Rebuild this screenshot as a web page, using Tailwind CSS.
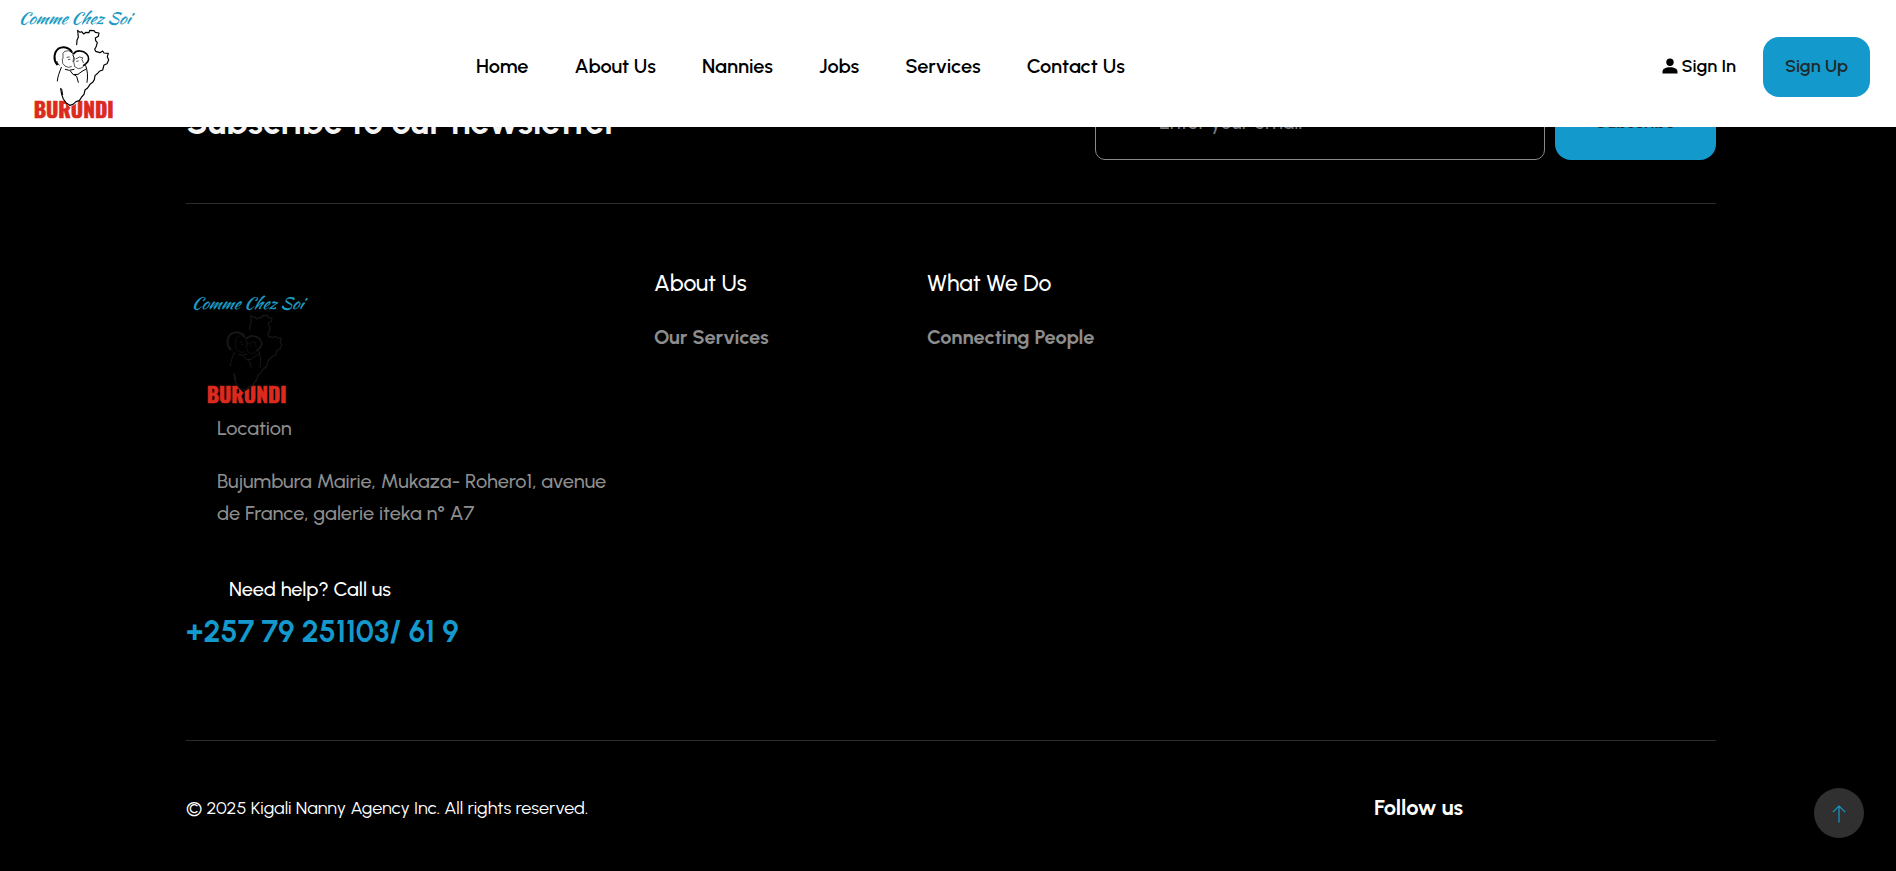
<!DOCTYPE html>
<html lang="en">
<head>
<meta charset="utf-8">
<meta name="viewport" content="width=device-width, initial-scale=1">
<title>Comme Chez Soi Burundi</title>
<script src="https://cdn.jsdelivr.net/npm/@tailwindcss/browser@4"></script>
</head>
<body class="min-h-screen bg-black font-['Urbanist','Lato',sans-serif] text-xl leading-8 font-medium text-white">

<!-- Logo artwork, shared by header and footer -->
<svg class="hidden" aria-hidden="true">
  <symbol id="logo" viewBox="39 0 411 378">
    <text x="54" y="69" font-family="'Brush Script MT','Kaushan Script','Yellowtail','Liberation Serif',serif" font-style="italic" font-weight="normal" font-size="49" fill="#1b9bc4">Comme Chez Soi</text>
    <text x="101" y="351" font-family="Impact,Oswald,'Roboto Condensed','Liberation Sans',sans-serif" font-weight="bold" font-size="63" fill="#dc2a1e" stroke="#dc2a1e" stroke-width="2">BURUNDI</text>
    <path d="M186 286L196 303L209 318L222 312L240 298L252 280Z" fill="var(--logo-bg)"/>
    <g fill="none" stroke="currentColor" stroke-linecap="round" stroke-linejoin="round">
      <path stroke-width="3.5" d="M230 131L231 118L235 109L233 88L240 94L245 92L251 99L258 94L267 95L269 88L282 89L286 94L297 96L295 106L286 111L287 119L292 125L288 138L284 145L287 151L300 155L308 150L312 156L325 157L322 167L326 177L321 188L312 192L308 207L298 211L294 216L285 224L283 236L278 244L270 250L262 262L255 267L252 280L245 288L238 299L228 302L219 310L209 313L198 305L190 294L185 280L182 263"/>
      <path stroke-width="6" d="M171 190C160 178 161 154 175 143C188 135 207 138 215 152"/>
      <path stroke-width="2" d="M174 191L172 182L165 181M172 186L178 193M189 172L189 157L194 151L205 149L217 154L221 169L219 182M214 197L205 199L195 195L188 187L187 174"/>
      <path stroke-width="5" d="M221 158C229 147 249 147 260 159C269 169 267 181 258 188L251 193"/>
      <path stroke-width="2" d="M219 164L225 174L221 181L224 197L235 203L245 201L253 192M250 185L246 176L248 170L238 168L229 173M201 169L208 168M205 176L210 175M230 181L235 180"/>
      <path stroke-width="3" d="M184 199C178 215 173 226 172 240M196 205L208 208L222 205M211 210L220 221L234 220L246 211L257 205M222 221L230 226L235 244M257 194C263 211 264 225 261 244M185 264L188 281"/>
    </g>
  </symbol>
</svg>

<header class="fixed inset-x-0 top-0 z-10 flex h-[127px] items-center bg-white pr-[26px] pl-[13px] text-black">
  <a href="#" aria-label="Comme Chez Soi Burundi" class="[--logo-bg:#fff]">
    <svg class="h-[126px] w-[137px]"><use href="#logo"/></svg>
  </a>
  <nav class="ml-[326px] flex gap-[46px] pt-[5px] font-semibold">
    <a href="#">Home</a>
    <a href="#">About Us</a>
    <a href="#">Nannies</a>
    <a href="#">Jobs</a>
    <a href="#">Services</a>
    <a href="#">Contact Us</a>
  </nav>
  <div class="ml-auto flex items-center gap-[27px] pt-[7px] text-lg font-semibold">
    <a href="#" class="flex items-center gap-1 pb-[2px]">
      <svg class="size-4" viewBox="0 0 16 16" fill="currentColor" aria-hidden="true"><circle cx="8" cy="4.2" r="3.7"/><path d="M.5 15.5v-1.7C.5 11 3.500 9.300 8 9.300s7.500 1.700 7.500 4.500v1.700z"/></svg>
      Sign In
    </a>
    <a href="#" class="flex h-[60px] w-[107px] items-center justify-center rounded-2xl bg-[#1399cc] pb-[2px] text-[#20292d]">Sign Up</a>
  </div>
</header>

<footer class="pt-[84px] pr-[180px] pl-[186px]">
  <section class="flex items-center justify-between border-b border-[#2c2c2c] pb-[43px]">
    <h2 class="text-[35px] font-bold text-[#f5f5f5]">Subscribe to our newsletter</h2>
    <form class="flex gap-[10px]">
      <input type="email" aria-label="Email" placeholder="Enter your email" class="h-[76px] w-[450px] rounded-[10px] border border-[#8a8a8a] bg-black px-[63px] text-xl text-white placeholder:text-[#7d7d7d]">
      <button type="button" class="h-[76px] w-[161px] rounded-2xl bg-[#1399cc] text-lg font-semibold text-[#20292d]">Subscribe</button>
    </form>
  </section>

  <section class="grid grid-cols-[468fr_273fr_789fr] border-b border-[#2c2c2c] pb-[88px]">
    <div class="pt-[82px]">
      <a href="#" aria-label="Comme Chez Soi Burundi" class="block text-[#171717] [--logo-bg:#000]">
        <svg class="h-[126px] w-[137px]"><use href="#logo"/></svg>
      </a>
      <div class="pl-[31px] text-[#8d8d8d]">
        <p>Location</p>
        <p class="mt-[21px] max-w-[410px]">Bujumbura Mairie, Mukaza- Rohero1, avenue de France, galerie iteka n° A7</p>
      </div>
      <p class="mt-11 pl-[43px]">Need help? Call us</p>
      <a href="tel:+25779251103" class="mt-[7px] block text-3xl leading-10 font-bold text-[#1399cc]">+257 79 251103/ 61 9</a>
    </div>
    <div class="pt-[63px]">
      <h3 class="text-[23px] leading-8">About Us</h3>
      <a href="#" class="mt-[22px] block font-bold text-[#8d8d8d]">Our Services</a>
    </div>
    <div class="pt-[63px]">
      <h3 class="text-[23px] leading-8">What We Do</h3>
      <a href="#" class="mt-[22px] block font-bold text-[#8d8d8d]">Connecting People</a>
    </div>
  </section>

  <section class="flex items-center justify-between pt-[51px]">
    <p class="text-lg leading-8 font-normal">© 2025 Kigali Nanny Agency Inc. All rights reserved.</p>
    <h4 class="w-[342px] text-[22px] leading-8 font-bold">Follow us</h4>
  </section>
</footer>

<button type="button" aria-label="Back to top" class="fixed right-8 bottom-[33px] flex size-[50px] items-center justify-center rounded-full bg-[#303030] pt-[2px] text-[#1399cc]">
  <svg class="h-[18px] w-[14px]" viewBox="0 0 14 18" fill="none" stroke="currentColor" stroke-width="1.200" aria-hidden="true"><path d="M7 17.500V1M.8 7.200L7 1l6.200 6.200"/></svg>
</button>
</body>
</html>
